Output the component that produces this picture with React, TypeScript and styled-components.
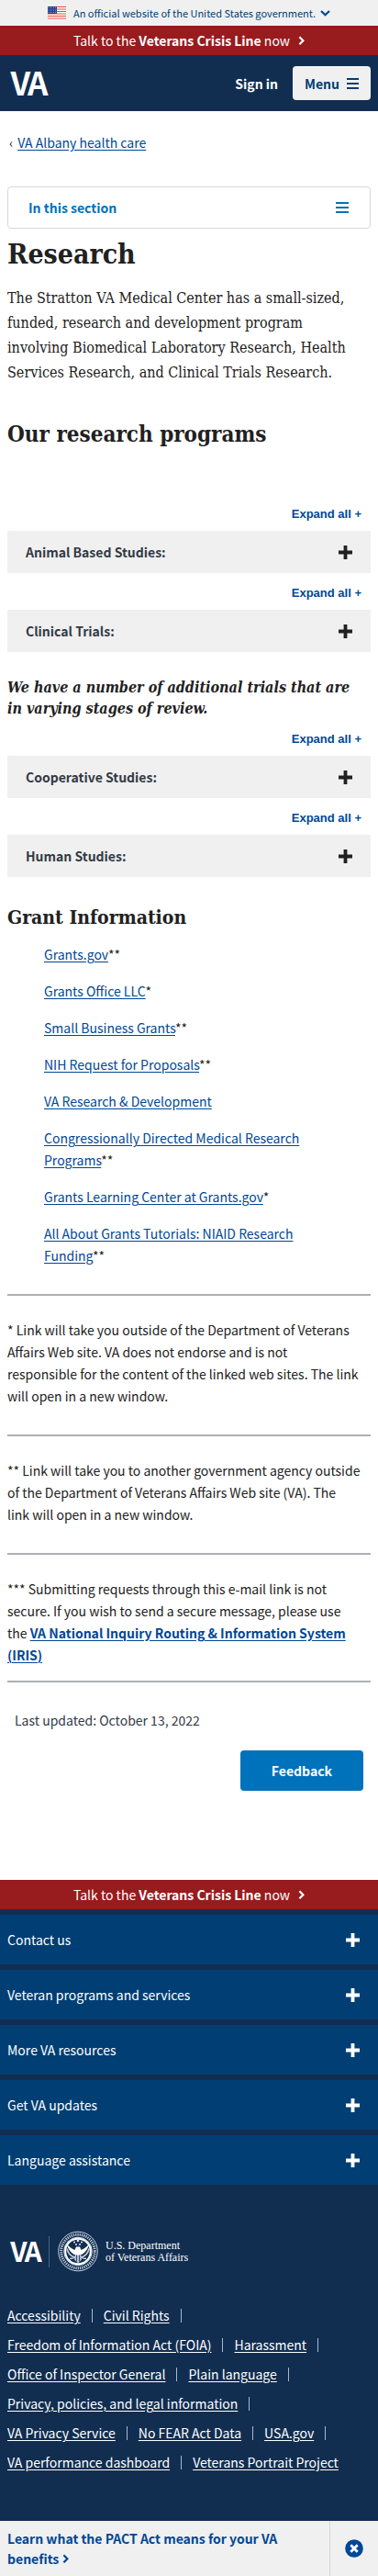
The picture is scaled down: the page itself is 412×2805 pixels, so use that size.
import React from "react";
import styled, { createGlobalStyle, css } from "styled-components";

const sans = `"Noto Sans CJK SC", "Open Sans", sans-serif`;
const serif = `"DejaVu Serif Condensed", "DejaVu Serif", serif`;

const GlobalStyle = createGlobalStyle`
  *, *::before, *::after { box-sizing: border-box; }
  body {
    margin: 0;
    background: #fff;
    color: #212121;
    font-family: ${sans};
    font-size: 14px;
    line-height: 24px;
  }
  button { font-family: inherit; font-size: inherit; line-height: inherit; border: 0; margin: 0; cursor: pointer; }
  h1, h2, h3, p, ul, hr { margin: 0; padding: 0; }
  svg { display: block; flex: none; }
`;

const GovBanner = styled.button`
  display: flex;
  align-items: center;
  justify-content: center;
  width: 100%;
  height: 28px;
  padding: 0;
  background: #f0f0f0;
  color: #003e73;
`;

const GovText = styled.span`
  margin: 0 5px 0 8px;
  font-size: 11px;
`;

const CrisisLine = styled.a`
  display: flex;
  align-items: center;
  justify-content: center;
  gap: 9px;
  height: 32px;
  background: #981b1e;
  color: #fff;
  text-decoration: none;
`;

const Header = styled.header`
  display: flex;
  align-items: center;
  height: 61px;
  padding: 0 8px 0 12px;
  background: #112e51;
`;

const HomeLink = styled.a`
  margin-right: auto;
`;

const SignIn = styled.button`
  padding: 0;
  background: none;
  color: #fff;
  font-weight: 700;
`;

const MenuButton = styled.button`
  display: flex;
  align-items: center;
  gap: 8px;
  height: 37px;
  margin-left: 16px;
  padding: 0 13px;
  border-radius: 4px;
  background: #f0f0f0;
  color: #003e73;
  font-weight: 700;
`;

const Main = styled.main`
  padding: 0 8px;
`;

const Breadcrumb = styled.nav`
  display: flex;
  gap: 5px;
  padding: 22px 2px 36px;
`;

const Link = styled.a<{ $strong?: boolean }>`
  color: #004795;
  text-decoration: underline;
  text-underline-offset: 2px;
  font-weight: ${(p) => (p.$strong ? 700 : 400)};
`;

const SectionToggle = styled.button`
  display: flex;
  align-items: center;
  justify-content: space-between;
  width: 100%;
  height: 46px;
  padding: 0 23px 0 22px;
  border: 1px solid #d6d7d9;
  border-radius: 4px;
  background: #fff;
  color: #0071bb;
  font-weight: 700;
`;

const heading = css`
  font-family: ${serif};
  font-weight: 700;
  color: #212121;
`;

const PageTitle = styled.h1`
  ${heading}
  margin-top: 8px;
  font-size: 30px;
  line-height: 40px;
`;

const Lead = styled.p`
  margin-top: 14px;
  padding-right: 20px;
  font-family: ${serif};
  font-size: 16px;
  line-height: 27px;
`;

const SectionTitle = styled.h2`
  ${heading}
  margin-top: 38px;
  font-size: 24px;
  line-height: 32px;
`;

const SubTitle = styled.h3<{ $italic?: boolean }>`
  ${heading}
  margin-top: ${(p) => (p.$italic ? 27 : 32)}px;
  padding-right: 10px;
  font-size: ${(p) => (p.$italic ? 16 : 21)}px;
  font-style: ${(p) => (p.$italic ? "italic" : "normal")};
  line-height: 23px;
`;

const AccordionGroup = styled.section`
  display: flex;
  flex-direction: column;
  align-items: flex-end;
`;

const ExpandAll = styled.button`
  height: 40px;
  padding: 4px 10px 0;
  background: none;
  color: #004795;
  font-family: "Liberation Sans", sans-serif;
  font-size: 13px;
  font-weight: 700;
`;

const AccordionButton = styled.button`
  display: flex;
  align-items: center;
  justify-content: space-between;
  width: 100%;
  height: 46px;
  padding: 0 20px;
  background: #f0f0f0;
  color: #323a45;
  font-weight: 700;
`;

const Programs = styled.div`
  padding-top: 49px;
`;

const GrantList = styled.ul`
  display: flex;
  flex-direction: column;
  gap: 16px;
  margin: 17px 0 30px;
  padding: 0 40px;
  list-style: none;
`;

const Note = styled.p`
  margin: 25px 0 30px;
`;

const LastNote = styled(Note)`
  margin-bottom: 16px;
`;

const Rule = styled.hr`
  height: 2px;
  border: 0;
  background: #aeb0b5;
`;

const Updated = styled.p`
  margin-top: 29px;
  padding: 0 8px;
  color: #323a45;
`;

const FeedbackRow = styled.div`
  display: flex;
  justify-content: flex-end;
  padding: 21px 8px 97px;
`;

const FeedbackButton = styled.button`
  height: 44px;
  padding: 0 34px;
  border-radius: 4px;
  background: #0071bb;
  color: #fff;
  font-weight: 700;
`;

const Footer = styled.footer`
  background: #112e51;
`;

const FooterPanels = styled.div`
  display: flex;
  flex-direction: column;
  gap: 6px;
  padding-top: 6px;
`;

const FooterPanel = styled.button`
  display: flex;
  align-items: center;
  justify-content: space-between;
  height: 54px;
  padding: 0 20px 0 8px;
  background: #003e73;
  color: #fff;
`;

const Brand = styled.div`
  display: flex;
  align-items: center;
  padding: 50px 8px 0 11px;
`;

const BrandDivider = styled.span`
  width: 1px;
  height: 34px;
  margin: 0 9px 0 7px;
  background: #4a6583;
`;

const BrandName = styled.span`
  margin-left: 8px;
  color: #fff;
  font-family: "Liberation Serif", serif;
  font-size: 12px;
  line-height: 13px;
`;

const FooterLinks = styled.ul`
  display: flex;
  flex-wrap: wrap;
  && {
    padding: 31px 8px 48px;
  }
  list-style: none;
`;

const FooterItem = styled.li`
  display: flex;
  align-items: center;
  height: 32px;

  &:not(:last-child)::after {
    content: "";
    width: 1px;
    height: 15px;
    margin: 0 12px;
    background: #a9b8c8;
  }
`;

const FooterLink = styled.a`
  color: #fff;
  text-decoration: underline;
  text-underline-offset: 2px;
`;

const Promo = styled.aside`
  display: flex;
  background: #f0f0f0;
  color: #004795;
`;

const PromoLink = styled.a`
  flex: 1;
  padding: 8px 40px 8px 8px;
  color: inherit;
  font-weight: 700;
  line-height: 22px;
  text-decoration: none;
`;

const PromoClose = styled.button`
  display: flex;
  align-items: center;
  justify-content: center;
  width: 53px;
  padding: 0;
  border-left: 1px solid #d6d7d9;
  background: none;
`;

const InlineChevron = styled.svg`
  display: inline-block;
  margin-left: 4px;
`;

const Mark = styled.svg`
  overflow: visible;
`;

const Plus = ({ color = "#212121" }: { color?: string }) => (
  <svg width="15" height="15" viewBox="0 0 15 15" aria-hidden="true">
    <path d="M5.6 0h3.8v5.6H15v3.8H9.4V15H5.6V9.4H0V5.6h5.6z" fill={color} />
  </svg>
);

const Bars = ({ color, width }: { color: string; width: number }) => (
  <svg width={width} height="12" viewBox={`0 0 ${width} 12`} aria-hidden="true">
    <path d={`M0 0h${width}v2H0zM0 5h${width}v2H0zM0 10h${width}v2H0z`} fill={color} />
  </svg>
);

const chevronPath = "M1.4 1.2 5.4 5.2 1.4 9.2";

const Chevron = () => (
  <svg width="7" height="11" viewBox="0 0 7 11" aria-hidden="true">
    <path d={chevronPath} fill="none" stroke="#fff" strokeWidth="2.2" />
  </svg>
);

const Flag = () => (
  <svg width="20" height="14" viewBox="0 0 20 14" aria-hidden="true">
    <rect width="20" height="14" fill="#fff" />
    <path
      d="M0 .5h20M0 3h20M0 5.5h20M0 8h20M0 10.5h20M0 13h20"
      stroke="#dd4b3c"
      strokeWidth="1.2"
    />
    <rect width="10" height="8" fill="#2b3f8f" />
    <g fill="#c5cbe6">
      {[1.5, 4, 6.5, 9].map((x) => [1.5, 4, 6.5].map((y) => <circle key={`${x}-${y}`} cx={x - 0.3} cy={y} r="0.5" />))}
    </g>
  </svg>
);

const VaMark = ({ width, height }: { width: number; height: number }) => (
  <Mark width={width} height={height} viewBox="0 0 40 26" role="img" aria-label="VA">
    <text y="26" fill="#fff" fontFamily={sans} fontWeight="700" fontSize="35">
      <tspan x="-0.5">V</tspan>
      <tspan x="18">A</tspan>
    </text>
  </Mark>
);

const Seal = () => (
  <svg width="44" height="45" viewBox="0 0 44 44" aria-hidden="true">
    <g fill="none" stroke="#fff">
      <circle cx="22" cy="22" r="21.3" stroke="#c9d3de" strokeWidth="1" />
      <circle cx="22" cy="22" r="18.3" stroke="#b5c2d0" strokeWidth="3" strokeDasharray="1.3 1" />
      <circle cx="22" cy="22" r="15.3" stroke="#d8e0e8" strokeWidth="1" />
      <circle cx="22" cy="22" r="13.8" strokeWidth="2" />
    </g>
    <path d="M10 14c1 6 5 10 9 12l3 3 3-3c4-2 8-6 9-12-2 3-5 5-8.500 6.500L24 17h-4l-1.500 3.500C15 19 12 17 10 14z" fill="#fff" />
    <path d="M10 19c1 5 4 8 8 9.500M34 19c-1 5-4 8-8 9.500M13 30c4 0 5-1 7-3M31 30c-4 0-5-1-7-3" fill="none" stroke="#c9d3de" strokeWidth="1.500" />
    <path d="M19 26h6l1 5-4 4-4-4z" fill="#b5c2d0" />
    <path d="M20.500 26v7M23.500 26v7" stroke="#112e51" strokeWidth=".8" />
    <g fill="#e4e9ef">
      <circle cx="18" cy="12" r="1" />
      <circle cx="22" cy="10.500" r="1.300" />
      <circle cx="26" cy="12" r="1" />
      <circle cx="20" cy="14.500" r="1" />
      <circle cx="24" cy="14.500" r="1" />
    </g>
  </svg>
);

const CrisisBar = () => (
  <CrisisLine href="#crisis-line">
    <span>
      Talk to the <strong>Veterans Crisis Line</strong> now
    </span>
    <Chevron />
  </CrisisLine>
);

const Accordion = ({ title }: { title: string }) => (
  <AccordionGroup>
    <ExpandAll type="button">Expand all +</ExpandAll>
    <AccordionButton type="button" aria-expanded="false">
      {title}
      <Plus />
    </AccordionButton>
  </AccordionGroup>
);

const grants: [string, string][] = [
  ["Grants.gov", "**"],
  ["Grants Office LLC", "*"],
  ["Small Business Grants", "**"],
  ["NIH Request for Proposals", "**"],
  ["VA Research & Development", ""],
  ["Congressionally Directed Medical Research Programs", "**"],
  ["Grants Learning Center at Grants.gov", "*"],
  ["All About Grants Tutorials: NIAID Research Funding", "**"],
];

const panels = [
  "Contact us",
  "Veteran programs and services",
  "More VA resources",
  "Get VA updates",
  "Language assistance",
];

const footerLinks = [
  "Accessibility",
  "Civil Rights",
  "Freedom of Information Act (FOIA)",
  "Harassment",
  "Office of Inspector General",
  "Plain language",
  "Privacy, policies, and legal information",
  "VA Privacy Service",
  "No FEAR Act Data",
  "USA.gov",
  "VA performance dashboard",
  "Veterans Portrait Project",
];

export default function App() {
  return (
    <>
      <GlobalStyle />
      <GovBanner type="button">
        <Flag />
        <GovText>An official website of the United States government.</GovText>
        <svg width="11" height="7" viewBox="0 0 11 7" aria-hidden="true">
          <path d="M1 1l4.500 4.300L10 1" fill="none" stroke="#004795" strokeWidth="2.200" />
        </svg>
      </GovBanner>
      <CrisisBar />
      <Header>
        <HomeLink href="#home">
          <VaMark width={40} height={26} />
        </HomeLink>
        <SignIn type="button">Sign in</SignIn>
        <MenuButton type="button">
          Menu
          <Bars color="#003e73" width={13} />
        </MenuButton>
      </Header>

      <Main>
        <Breadcrumb aria-label="Breadcrumb">
          <span aria-hidden="true">‹</span>
          <Link href="#albany">VA Albany health care</Link>
        </Breadcrumb>
        <SectionToggle type="button">
          In this section
          <Bars color="#0071bb" width={14} />
        </SectionToggle>

        <PageTitle>Research</PageTitle>
        <Lead>
          The Stratton VA Medical Center has a small-sized, funded, research and development program
          involving Biomedical Laboratory Research, Health Services Research, and Clinical Trials
          Research.
        </Lead>

        <SectionTitle>Our research programs</SectionTitle>
        <Programs>
          <Accordion title="Animal Based Studies:" />
          <Accordion title="Clinical Trials:" />
        </Programs>
        <SubTitle $italic>
          We have a number of additional trials that are in varying stages of review.
        </SubTitle>
        <Accordion title="Cooperative Studies:" />
        <Accordion title="Human Studies:" />

        <SubTitle>Grant Information</SubTitle>
        <GrantList>
          {grants.map(([name, mark]) => (
            <li key={name}>
              <Link href="#grants">{name}</Link>
              {mark}
            </li>
          ))}
        </GrantList>

        <Rule />
        <Note>
          * Link will take you outside of the Department of Veterans Affairs Web site. VA does not
          endorse and is not
          <br />
          responsible for the content of the linked web sites. The link
          <br />
          will open in a new window.
        </Note>
        <Rule />
        <Note>
          ** Link will take you to another government agency outside of the Department of Veterans
          Affairs Web site (VA). The
          <br />
          link will open in a new window.
        </Note>
        <Rule />
        <LastNote>
          *** Submitting requests through this e-mail link is not secure. If you wish to send a
          secure message, please use
          <br />
          the{" "}
          <Link href="#iris" $strong>
            VA National Inquiry Routing &amp; Information System (IRIS)
          </Link>
        </LastNote>
        <Rule />
        <Updated>Last updated: October 13, 2022</Updated>
        <FeedbackRow>
          <FeedbackButton type="button">Feedback</FeedbackButton>
        </FeedbackRow>
      </Main>

      <CrisisBar />
      <Footer>
        <FooterPanels>
          {panels.map((title) => (
            <FooterPanel key={title} type="button" aria-expanded="false">
              {title}
              <Plus color="#fff" />
            </FooterPanel>
          ))}
        </FooterPanels>
        <Brand>
          <VaMark width={35} height={22} />
          <BrandDivider />
          <Seal />
          <BrandName>
            U.S. Department
            <br />
            of Veterans Affairs
          </BrandName>
        </Brand>
        <FooterLinks>
          {footerLinks.map((name) => (
            <FooterItem key={name}>
              <FooterLink href="#footer">{name}</FooterLink>
            </FooterItem>
          ))}
        </FooterLinks>
      </Footer>
      <Promo>
        <PromoLink href="#pact-act">
          Learn what the PACT Act means for your VA benefits
          <InlineChevron width="7" height="11" viewBox="0 0 7 11" aria-hidden="true">
            <path d={chevronPath} fill="none" stroke="#004795" strokeWidth="2.2" />
          </InlineChevron>
        </PromoLink>
        <PromoClose type="button" aria-label="Close">
          <svg width="20" height="20" viewBox="0 0 20 20" aria-hidden="true">
            <circle cx="10" cy="10" r="9.800" fill="#004795" />
            <path d="M6.300 6.300l7.400 7.400M13.700 6.300l-7.400 7.400" stroke="#fff" strokeWidth="2.800" />
          </svg>
        </PromoClose>
      </Promo>
    </>
  );
}
